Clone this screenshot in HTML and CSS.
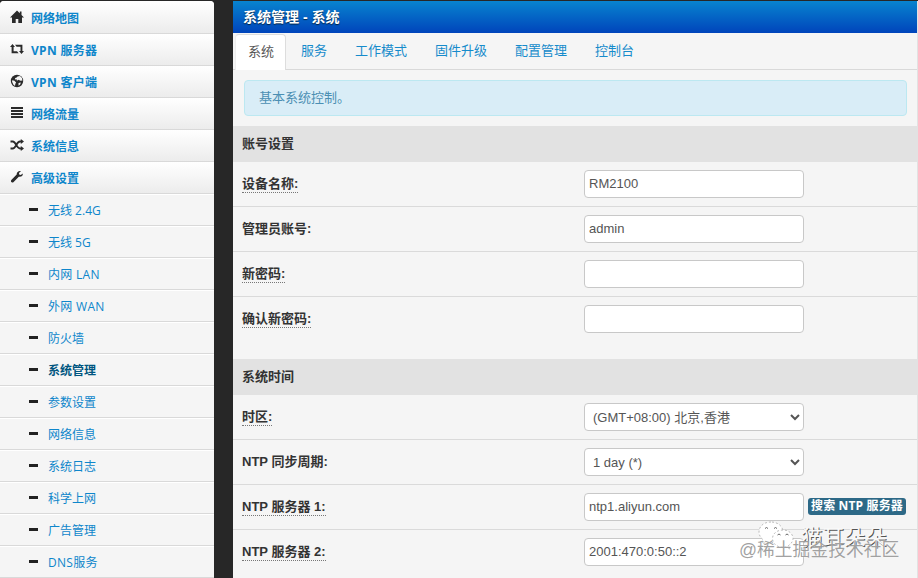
FILE: index.html
```html
<!DOCTYPE html>
<html lang="zh-CN">
<head>
<meta charset="utf-8">
<title>系统管理 - 系统</title>
<link rel="stylesheet" href="styles.css">
</head>
<body>
<div class="page">
  <nav class="sidebar">
    <a class="item"><svg viewBox="0 0 14 14"><path d="M7 .6 0 7.400h2V13h3.700V9h2.600v4H12V7.400h2L11.500 5V1.500H9.800v1.800z"/></svg><span>网络地图</span></a>
    <a class="item latin"><svg viewBox="0 0 14 14"><path d="M2.500 2 0 5h1.600v6.200h7L7 9.300H3.600V5H5zM5 2.800h7.400V9H14l-2.500 3L9 9h1.500V4.700H6.600z"/></svg><span>VPN 服务器</span></a>
    <a class="item latin"><svg viewBox="0 0 14 14"><circle cx="7" cy="7" r="6.200"/><path class="land" d="M7.500 2.500 10 1.900l1.800 1.900.7 2.700-2 .3-2-1-1.600 1-.3-1.500-1.700.2.300-1.500 1.500-.6zM2.200 6.200l2.200.6 1.700 1.600-.8 1.500-.3 2-1.700-1.500-1.200-2.600zM8.500 9l2.300-.6-.6 2-1.700 1.300z"/></svg><span>VPN 客户端</span></a>
    <a class="item"><svg viewBox="0 0 14 14"><path d="M1 1h12v2H1zM1 4h12v2H1zM1 7h12v2H1zM1 10h12v2H1z"/></svg><span>网络流量</span></a>
    <a class="item"><svg viewBox="0 0 14 14"><path class="line" d="M.5 3.500h2.300C6 3.500 6.500 10.500 10 10.500h1.500M.5 10.500h2.300C6 10.500 6.500 3.500 10 3.500h1.500"/><path d="m10.800 1 3.200 2.500L10.800 6zM10.800 8l3.200 2.500-3.200 2.500z"/></svg><span>系统信息</span></a>
    <a class="item"><svg viewBox="0 0 14 14"><path d="M12.700 3.500 10.800 5 9.200 4.500 9 2.900 11 1.100C9.200.5 6.500 1.500 6.700 4.600L1.300 10c-1.300 1.500.8 3.500 2.100 2.200l5.400-5.400c3.300.3 4.400-1.900 3.900-3.300z"/></svg><span>高级设置</span></a>
    <a class="sub">无线 2.4G</a>
    <a class="sub">无线 5G</a>
    <a class="sub latin">内网 LAN</a>
    <a class="sub latin">外网 WAN</a>
    <a class="sub">防火墙</a>
    <a class="sub current">系统管理</a>
    <a class="sub">参数设置</a>
    <a class="sub">网络信息</a>
    <a class="sub">系统日志</a>
    <a class="sub">科学上网</a>
    <a class="sub">广告管理</a>
    <a class="sub latin">DNS服务</a>
  </nav>
  <main class="panel">
    <h1>系统管理 - 系统</h1>
    <div class="tabs">
      <a class="active">系统</a><a>服务</a><a>工作模式</a><a>固件升级</a><a>配置管理</a><a>控制台</a>
    </div>
    <p class="info">基本系统控制。</p>
    <section class="account">
      <h2>账号设置</h2>
      <div class="row"><label><span class="help">设备名称:</span></label><input type="text" value="RM2100"></div>
      <div class="row"><label>管理员账号:</label><input type="text" value="admin"></div>
      <div class="row"><label><span class="help">新密码:</span></label><input type="password"></div>
      <div class="row"><label><span class="help">确认新密码:</span></label><input type="password"></div>
    </section>
    <section>
      <h2>系统时间</h2>
      <div class="row"><label><span class="help">时区:</span></label><select><option>(GMT+08:00) 北京,香港</option></select></div>
      <div class="row"><label>NTP 同步周期:</label><select><option>1 day (*)</option></select></div>
      <div class="row"><label><span class="help">NTP 服务器 1:</span></label><input type="text" value="ntp1.aliyun.com"><a class="search">搜索 NTP 服务器</a></div>
      <div class="row"><label><span class="help">NTP 服务器 2:</span></label><input type="text" value="2001:470:0:50::2"></div>
    </section>
  </main>
</div>
<div class="mark-name">
  <svg viewBox="0 0 38 30"><path class="bubble" d="M13 1C5.500 1 1 5.500 1 11c0 3.500 1.800 6 4.500 8L4.500 23l4.500-2c9 2.500 16-3 16-10C25 5.500 20 1 13 1z"/><path class="bubble" d="M25 9c-6.500 0-10.500 4-10.500 8.500 0 6 6 9.800 13 8.500l4 2-1-3.500c3-2 4.500-4.300 4.500-7C35 13 31 9 25 9z"/><path class="eyes" d="M7 7.500q1.500-2 3 0M16 7.500q1.500-2 3 0M19.500 14q1.500-2 3 0M27.500 14q1.500-2 3 0"/></svg>
  <span>猫耳朵朵</span>
</div>
<div class="mark-site">@稀土掘金技术社区</div>
</body>
</html>
```
FILE: styles.css
```css
* { box-sizing: border-box; }

body {
  margin: 0;
  width: 918px;
  height: 578px;
  overflow: hidden;
  background: #272727;
  color: #333;
  font: 13px/20px "Liberation Sans", "Noto Sans CJK SC", sans-serif;
}

.page {
  display: flex;
  gap: 19px;
  padding-top: 1px;
}

.sidebar {
  width: 214px;
  height: 577px;
  overflow: hidden;
  border-radius: 4px 4px 0 0;
  background: #f5f5f5;
  font: 12px/18px "Open Sans", "Noto Sans CJK SC", sans-serif;
  color: #0e86cb;
}

.item, .sub {
  display: flex;
  align-items: center;
  height: 32px;
  border-bottom: 1px solid #d9d9d9;
}

.item {
  gap: 7px;
  padding: 2px 0 0 10px;
  background: linear-gradient(#fff, #ececec);
  font-weight: 700;
}

.item:first-child {
  height: 33px;
  padding-top: 3px;
}

.latin { letter-spacing: .3px; }

.item svg {
  width: 14px;
  height: 14px;
  margin-top: -3px;
  fill: #2a2a2a;
}

.item .land { fill: #f5f5f5; }

.item .line {
  fill: none;
  stroke: #2a2a2a;
  stroke-width: 1.9;
}

.sub {
  gap: 10px;
  padding: 2px 0 0 29px;
  border-top: 1px solid #fff;
}

.sub::before {
  content: "";
  width: 9px;
  height: 3px;
  margin-top: -3px;
  background: #222;
}

.sub.current {
  color: #005580;
  font-weight: 700;
}

.panel {
  width: 685px;
  height: 577px;
  overflow: hidden;
  border-right: 1px solid #e2e2e2;
  background: #f5f5f5;
}

h1 {
  height: 32px;
  margin: 0;
  padding: 0 10px;
  background: linear-gradient(#0884cf, #0044bb);
  color: #fff;
  font: bold 14px/33px "Liberation Sans", "Noto Sans CJK SC", sans-serif;
  text-shadow: 0 1px 1px #024;
}

.tabs {
  display: flex;
  gap: 2px;
  height: 37px;
  padding: 1px 0 0 2px;
  border-bottom: 1px solid #d9d9d9;
  color: #168bcb;
}

.tabs a {
  height: 36px;
  padding: 0 13px;
  line-height: 34px;
}

.tabs .active {
  padding: 0 11px 0 12px;
  border: 1px solid #ddd;
  border-bottom: 0;
  border-left-color: #eee;
  border-radius: 4px 4px 0 0;
  background: #fff;
  color: #555;
  line-height: 33px;
}

.info {
  height: 36px;
  margin: 10px 10px 10px 11px;
  padding-left: 14px;
  border: 1px solid #bce8f1;
  border-radius: 4px;
  background: #d9edf7;
  color: #4b8fb3;
  line-height: 33px;
}

h2 {
  height: 36px;
  margin: 0;
  padding-left: 9px;
  background: #e2e2e2;
  font: bold 13px/35px "Liberation Sans", "Noto Sans CJK SC", sans-serif;
}

.account { height: 233px; }

.row {
  display: flex;
  align-items: flex-start;
  height: 45px;
  padding: 8px 0 0 9px;
  border-bottom: 1px solid #dadada;
}

.row:last-child { border-bottom: 0; }

label {
  width: 342px;
  padding-top: 5px;
  font-weight: 700;
  line-height: 17px;
}

.help {
  display: inline-block;
  border-bottom: 1px dotted #777;
}

input, select {
  width: 220px;
  height: 28px;
  padding: 0 4px 1px;
  border: 1px solid #c8c8c8;
  border-radius: 4px;
  background: #fff;
  color: #555;
  font: 13px "Liberation Sans", "Noto Sans CJK SC", sans-serif;
}

select { padding: 0 4px; }

.search {
  height: 17px;
  margin: 5px 0 0 4px;
  padding: 0 3px;
  border-radius: 3px;
  background: #2d6987;
  color: #fff;
  font: bold 12px/16px "Open Sans", "Noto Sans CJK SC", sans-serif;
  letter-spacing: .15px;
  white-space: nowrap;
}

.mark-name {
  position: absolute;
  left: 758px;
  top: 519px;
  display: flex;
  align-items: center;
  gap: 5px;
  color: #f8f8f8;
  font: 21.500px/34px "Noto Sans CJK SC", sans-serif;
  text-shadow: 1px 1px 0 #555;
}

.mark-name svg {
  width: 38px;
  height: 30px;
}

.bubble {
  fill: #fff;
  stroke: #aaa;
  stroke-width: .8;
  stroke-dasharray: 2 2;
}

.eyes {
  fill: none;
  stroke: #666;
}

.mark-site {
  position: absolute;
  left: 739px;
  top: 537px;
  color: rgba(120, 120, 120, .7);
  font: 17.800px/26px "Liberation Sans", "Noto Sans CJK SC", sans-serif;
  text-shadow: 0 0 1px #fff;
  white-space: nowrap;
}
```
